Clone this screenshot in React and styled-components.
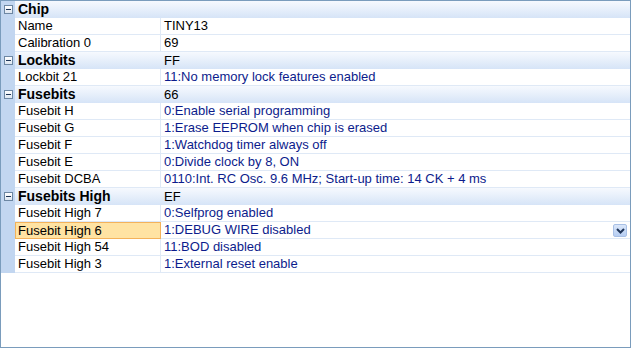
import React from 'react';
import styled, { createGlobalStyle } from 'styled-components';

const Global = createGlobalStyle`
  html, body { margin: 0; padding: 0; background: #fff; }
  body { font-family: "Liberation Sans", Arial, sans-serif; font-size: 13px; }
`;

const Frame = styled.div`
  box-sizing: border-box;
  width: 631px;
  height: 348px;
  border: 1px solid #7a9cbc;
  background: #fff;
  overflow: hidden;
`;

const Grid = styled.div`
  display: grid;
  grid-template-columns: 14px 146px 1fr;
`;

const Gutter = styled.div`
  height: 17px;
  background: #c2d6f0;
  display: flex;
  align-items: center;
  justify-content: center;
`;

const Cell = styled.div`
  box-sizing: border-box;
  height: 17px;
  line-height: 16px;
  padding-left: 3px;
  white-space: nowrap;
  border-bottom: 1px solid #dfe9f6;
  color: ${(p) => (p.$value ? '#0c1c8c' : '#000')};
  ${(p) => (p.$label ? 'border-right: 1px solid #dfe9f6;' : '')}
  ${(p) =>
    p.$selected
      ? 'background: #ffe3a3; border: 1px solid #f4b25a; padding-left: 2px; line-height: 15px;'
      : ''}
  position: relative;
`;

const CatCell = styled.div`
  box-sizing: border-box;
  height: 17px;
  line-height: 17px;
  padding-left: 3px;
  white-space: nowrap;
  font-weight: ${(p) => (p.$bold ? 'bold' : 'normal')};
  font-size: ${(p) => (p.$bold ? '14px' : '13px')};
  background: linear-gradient(#f6f9fe 0%, #e8f0fb 45%, #d6e4f7 100%);
  color: #000;
`;

const Toggle = styled.span`
  box-sizing: border-box;
  width: 9px;
  height: 9px;
  border: 1px solid #6d87a3;
  background: linear-gradient(#ffffff, #dde6f1);
  display: flex;
  align-items: center;
  justify-content: center;
  &::after {
    content: '';
    width: 5px;
    height: 1px;
    background: #1d3556;
  }
`;

const DropButton = styled.span`
  position: absolute;
  right: 3px;
  top: 2px;
  width: 14px;
  height: 13px;
  border-radius: 2px;
  background: linear-gradient(#dbe7fa, #b5cdf2);
  border: 1px solid #a8c0e6;
  box-sizing: border-box;
  display: flex;
  align-items: center;
  justify-content: center;
`;

const data = [
  {
    name: 'Chip',
    value: '',
    items: [
      ['Name', 'TINY13', false],
      ['Calibration 0', '69', false],
    ],
  },
  {
    name: 'Lockbits',
    value: 'FF',
    items: [['Lockbit 21', '11:No memory lock features enabled', true]],
  },
  {
    name: 'Fusebits',
    value: '66',
    items: [
      ['Fusebit H', '0:Enable serial programming', true],
      ['Fusebit G', '1:Erase EEPROM when chip is erased', true],
      ['Fusebit F', '1:Watchdog timer always off', true],
      ['Fusebit E', '0:Divide clock by 8, ON', true],
      ['Fusebit DCBA', '0110:Int. RC Osc. 9.6 MHz; Start-up time: 14 CK + 4 ms', true],
    ],
  },
  {
    name: 'Fusebits High',
    value: 'EF',
    items: [
      ['Fusebit High 7', '0:Selfprog enabled', true],
      ['Fusebit High 6', '1:DEBUG WIRE disabled', true, true],
      ['Fusebit High 54', '11:BOD disabled', true],
      ['Fusebit High 3', '1:External reset enable', true],
    ],
  },
];

const Chevron = () => (
  <svg width="9" height="6" viewBox="0 0 9 6">
    <path d="M1 1 L4.5 4.5 L8 1" fill="none" stroke="#1f3559" strokeWidth="2" />
  </svg>
);

export default function App() {
  return (
    <>
      <Global />
      <Frame>
        <Grid>
          {data.map((cat) => (
            <React.Fragment key={cat.name}>
              <Gutter>
                <Toggle />
              </Gutter>
              <CatCell $bold>{cat.name}</CatCell>
              <CatCell>{cat.value}</CatCell>
              {cat.items.map(([label, value, blue, selected]) => (
                <React.Fragment key={label}>
                  <Gutter />
                  <Cell $label $selected={selected}>
                    {label}
                  </Cell>
                  <Cell $value={blue}>
                    {value}
                    {selected && (
                      <DropButton>
                        <Chevron />
                      </DropButton>
                    )}
                  </Cell>
                </React.Fragment>
              ))}
            </React.Fragment>
          ))}
        </Grid>
      </Frame>
    </>
  );
}
